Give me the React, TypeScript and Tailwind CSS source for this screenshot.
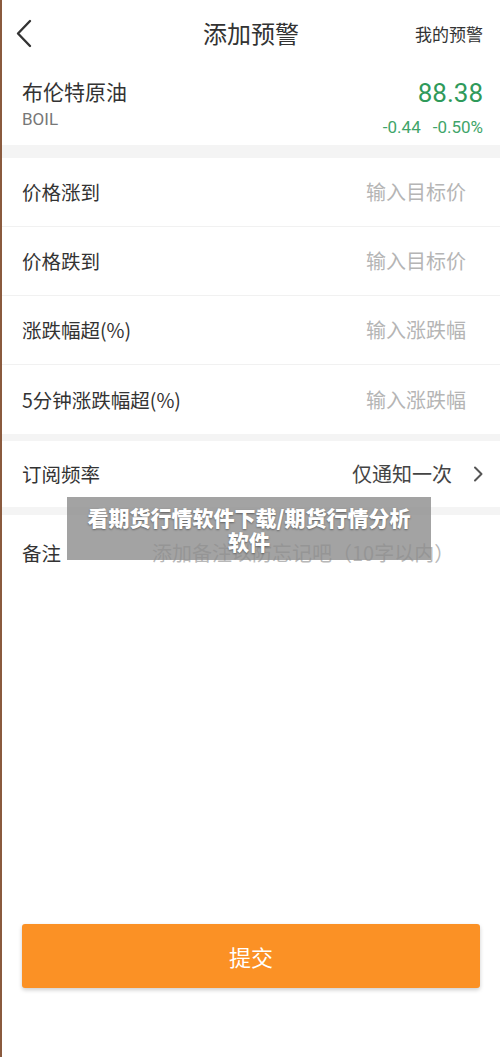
const font = { fontFamily: '"Noto Sans CJK SC", "Noto Sans", sans-serif' }

const rows = [
  { label: "价格涨到", hint: "输入目标价" },
  { label: "价格跌到", hint: "输入目标价" },
  { label: "涨跌幅超(%)", hint: "输入涨跌幅" },
  { label: "5分钟涨跌幅超(%)", hint: "输入涨跌幅" },
]

export default function App() {
  return (
    <div className="relative flex h-[1057px] w-[500px] flex-col overflow-hidden border-l-2 border-[#8a5a3e] bg-white text-[#333]" style={font}>
      {/* header */}
      <div className="relative flex h-[66px] items-center justify-center">
        <svg className="absolute left-[13px] top-[19px]" width="18" height="30" viewBox="0 0 18 30" fill="none">
          <polyline points="15,2 3,14.5 15,27" stroke="#333" strokeWidth="2.4" strokeLinecap="round" strokeLinejoin="round" />
        </svg>
        <span className="text-[24px] text-[#333]">添加预警</span>
        <span className="absolute right-[17px] top-[21px] text-[17px] text-[#333]">我的预警</span>
      </div>

      {/* quote */}
      <div className="flex h-[79px] items-start justify-between pl-[20px] pr-[17px] pt-[10px]">
        <div className="flex flex-col">
          <span className="text-[21px] leading-[30px]">布伦特原油</span>
          <span className="mt-[2px] text-[17px] leading-[22px] text-[#777]" style={{ fontFamily: "Roboto, sans-serif" }}>BOIL</span>
        </div>
        <div className="flex flex-col items-end" style={{ fontFamily: "Roboto, sans-serif" }}>
          <span className="mt-[2px] text-[26px] leading-[30px] text-[#2f9a5a]">88.38</span>
          <div className="mt-[8px] flex gap-[12px] text-[17px] leading-[22px] text-[#3fa56a]">
            <span>-0.44</span>
            <span>-0.50%</span>
          </div>
        </div>
      </div>

      <div className="h-[13px] bg-[#f4f4f4]" />

      {rows.map((r, i) => (
        <div
          key={r.label}
          className={`flex h-[69px] items-center justify-between pl-[20px] pr-[34px] ${i < rows.length - 1 ? "border-b border-[#f1f1f1]" : ""}`}
        >
          <span className="text-[19.5px] text-[#333]">{r.label}</span>
          <span className="text-[20px] text-[#b5b5b5]">{r.hint}</span>
        </div>
      ))}

      <div className="h-[7px] bg-[#f4f4f4]" />

      <div className="flex h-[66px] items-center justify-between pl-[20px] pr-[17px]">
        <span className="text-[19.5px] text-[#333]">订阅频率</span>
        <div className="flex items-center gap-[21px]">
          <span className="text-[20px] text-[#444]">仅通知一次</span>
          <svg width="10" height="16" viewBox="0 0 10 16" fill="none">
            <polyline points="2,1.5 8.5,8 2,14.5" stroke="#555" strokeWidth="2" strokeLinecap="round" strokeLinejoin="round" />
          </svg>
        </div>
      </div>

      <div className="h-[8px] bg-[#f4f4f4]" />

      <div className="flex h-[76px] items-center pl-[20px] pr-[14px]">
        <span className="w-[130px] text-[19.5px] text-[#333]">备注</span>
        <span className="text-[20px] text-[#b8b8b8]">添加备注以防忘记吧（10字以内）</span>
      </div>

      <div className="mt-auto pb-[69px] pl-[20px] pr-[20px]">
        <button className="flex h-[64px] w-full items-center justify-center rounded-[3px] bg-[#fb9125] text-[22px] text-white shadow-[0_2px_4px_rgba(0,0,0,0.2)]">
          提交
        </button>
      </div>

      {/* watermark */}
      <div className="absolute left-[65px] top-[497px] flex h-[63px] w-[364px] flex-col items-center justify-center bg-[#8c8c8c]/80 text-[21px] font-black leading-[24px] text-white [text-shadow:0_1px_2px_rgba(0,0,0,0.4)]">
        <span className="whitespace-nowrap">看期货行情软件下载/期货行情分析</span>
        <span>软件</span>
      </div>
    </div>
  )
}
